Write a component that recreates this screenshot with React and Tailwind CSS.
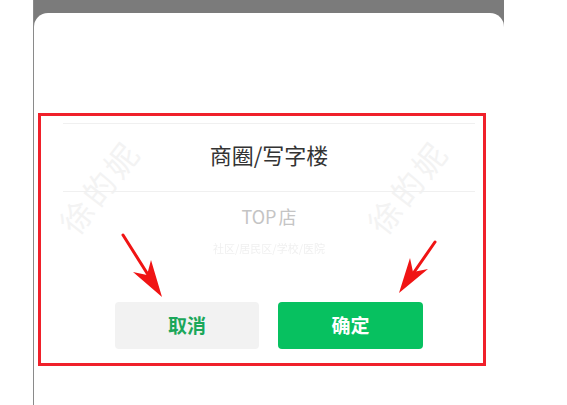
import React from "react";

const cjk = { fontFamily: '"Noto Sans CJK SC", "Noto Sans", sans-serif' };

const Watermark = ({ className }) => (
  <span
    className={`absolute text-[32px] tracking-[4px] text-[#f3f3f3] -rotate-[52deg] select-none ${className}`}
  >
    徐的妮
  </span>
);

const Arrows = () => (
  <svg
    className="absolute inset-0 pointer-events-none"
    width="567"
    height="405"
    viewBox="0 0 567 405"
  >
    {/* left arrow */}
    <line x1="123" y1="235" x2="152" y2="281" stroke="#f01414" strokeWidth="3" strokeLinecap="round" />
    <polygon points="162,297 133,272 147,275 151,260" fill="#f01414" />
    {/* right arrow */}
    <line x1="435" y1="242" x2="410" y2="278" stroke="#f01414" strokeWidth="3" strokeLinecap="round" />
    <polygon points="399,293 410,258 413,272 428,269" fill="#f01414" />
  </svg>
);

export default function App() {
  return (
    <div className="relative w-[567px] h-[405px] bg-white overflow-hidden" style={cjk}>
      <div className="flex h-full">
        <div className="ml-[33px] w-[471px] h-full flex flex-col border-l border-[#8a8a8a] bg-[#7b7b7b]">
          <div className="mt-[13px] flex-1 bg-white rounded-t-[14px] pt-[100px]">
            {/* annotated dialog */}
            <div className="relative ml-[4px] w-[448px] h-[253px] border-[3px] border-[#f0202a] pl-[22px] pr-[8px] pt-[7px] overflow-hidden">
              <Watermark className="left-[4px] top-[46px]" />
              <Watermark className="left-[312px] top-[46px]" />

              <div className="relative flex flex-col">
                <div className="h-px bg-[#f0f0f0]" />
                <div className="h-[67px] flex items-center justify-center text-[22px] text-[#333] -mt-[3px]">
                  商圈/写字楼
                </div>
                <div className="h-px bg-[#f0f0f0] mt-[3px]" />
                <div className="h-[50px] flex items-center justify-center text-[18px] text-[#c4c4c4] -mt-[1px]">
                  <span className="mr-[2px]">TOP</span>店
                </div>
                <div className="h-[14px] mt-[2px] flex justify-center text-[11px] leading-none text-[#f0f0f0] blur-[0.7px]">
                  社区/居民区/学校/医院
                </div>

                <div className="flex justify-center gap-[19px] mt-[45px]">
                  <button className="w-[144px] h-[47px] rounded-[4px] bg-[#f2f2f2] text-[19px] font-bold text-[#1ba75a]">
                    取消
                  </button>
                  <button className="w-[145px] h-[47px] rounded-[4px] bg-[#07c160] text-[19px] font-bold text-white">
                    确定
                  </button>
                </div>
              </div>
            </div>
          </div>
        </div>
      </div>
      <Arrows />
    </div>
  );
}
